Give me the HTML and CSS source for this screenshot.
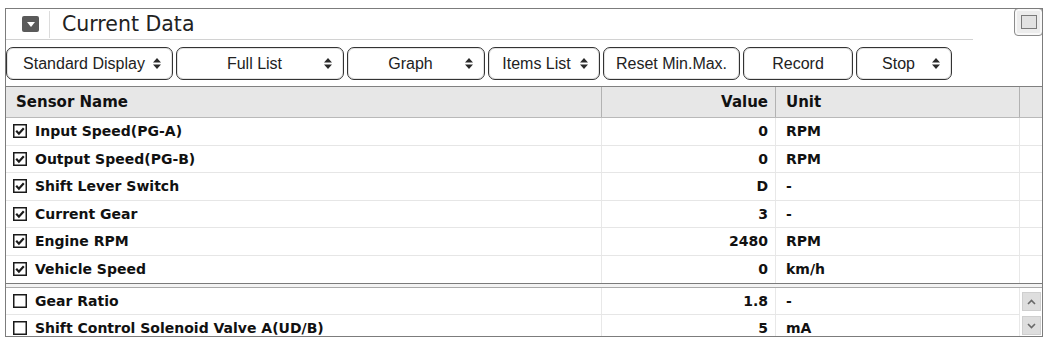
FILE: index.html
```html
<!DOCTYPE html>
<html lang="en">
<head>
    <meta charset="UTF-8">
    <meta name="viewport" content="width=device-width, initial-scale=1.0">
    <title>Current Data</title>
    <link rel="stylesheet" href="styles.css">
</head>
<body>
    <div class="panel">
        <div class="panel-title">
            <span class="collapse-btn">
                <svg width="8" height="5" viewBox="0 0 8 5"><path d="M0 0 L8 0 L4 5 Z" fill="#fff"/></svg>
            </span>
            <span class="title-sep"></span>
            <h1>Current Data</h1>
        </div>
        <span class="max-btn"><span class="max-inner"></span></span>

        <div class="toolbar">
            <button class="tool-btn select"><span class="label">Standard Display</span><svg class="arrows" width="8" height="11" viewBox="0 0 8 11"><path d="M0 4.5 L4 0 L8 4.5 Z M0 6.5 L8 6.5 L4 11 Z" fill="#2a2a2a"/></svg></button>
            <button class="tool-btn select"><span class="label">Full List</span><svg class="arrows" width="8" height="11" viewBox="0 0 8 11"><path d="M0 4.5 L4 0 L8 4.5 Z M0 6.5 L8 6.5 L4 11 Z" fill="#2a2a2a"/></svg></button>
            <button class="tool-btn select"><span class="label">Graph</span><svg class="arrows" width="8" height="11" viewBox="0 0 8 11"><path d="M0 4.5 L4 0 L8 4.5 Z M0 6.5 L8 6.5 L4 11 Z" fill="#2a2a2a"/></svg></button>
            <button class="tool-btn select tight"><span class="label">Items List</span><svg class="arrows" width="8" height="11" viewBox="0 0 8 11"><path d="M0 4.5 L4 0 L8 4.5 Z M0 6.5 L8 6.5 L4 11 Z" fill="#2a2a2a"/></svg></button>
            <button class="tool-btn">Reset Min.Max.</button>
            <button class="tool-btn">Record</button>
            <button class="tool-btn select"><span class="label">Stop</span><svg class="arrows" width="8" height="11" viewBox="0 0 8 11"><path d="M0 4.5 L4 0 L8 4.5 Z M0 6.5 L8 6.5 L4 11 Z" fill="#2a2a2a"/></svg></button>
        </div>

        <div class="grid">
            <div class="grid-head">
                <div class="cell name">Sensor Name</div>
                <div class="cell value">Value</div>
                <div class="cell unit">Unit</div>
                <div class="cell blank"></div>
            </div>

            <div class="grid-body">
                <div class="row">
                    <div class="cell name"><svg class="check" width="14" height="14" viewBox="0 0 14 14"><rect x="0.75" y="0.75" width="12.5" height="12.5" fill="#fff" stroke="#1a1a1a" stroke-width="1.5"/><path d="M3.2 6.8 L5.9 9.7 L10.8 4.2" fill="none" stroke="#1a1a1a" stroke-width="2.2"/></svg>Input Speed(PG-A)</div>
                    <div class="cell value">0</div>
                    <div class="cell unit">RPM</div>
                    <div class="cell blank"></div>
                </div>
                <div class="row">
                    <div class="cell name"><svg class="check" width="14" height="14" viewBox="0 0 14 14"><rect x="0.75" y="0.75" width="12.5" height="12.5" fill="#fff" stroke="#1a1a1a" stroke-width="1.5"/><path d="M3.2 6.8 L5.9 9.7 L10.8 4.2" fill="none" stroke="#1a1a1a" stroke-width="2.2"/></svg>Output Speed(PG-B)</div>
                    <div class="cell value">0</div>
                    <div class="cell unit">RPM</div>
                    <div class="cell blank"></div>
                </div>
                <div class="row">
                    <div class="cell name"><svg class="check" width="14" height="14" viewBox="0 0 14 14"><rect x="0.75" y="0.75" width="12.5" height="12.5" fill="#fff" stroke="#1a1a1a" stroke-width="1.5"/><path d="M3.2 6.8 L5.9 9.7 L10.8 4.2" fill="none" stroke="#1a1a1a" stroke-width="2.2"/></svg>Shift Lever Switch</div>
                    <div class="cell value">D</div>
                    <div class="cell unit">-</div>
                    <div class="cell blank"></div>
                </div>
                <div class="row">
                    <div class="cell name"><svg class="check" width="14" height="14" viewBox="0 0 14 14"><rect x="0.75" y="0.75" width="12.5" height="12.5" fill="#fff" stroke="#1a1a1a" stroke-width="1.5"/><path d="M3.2 6.8 L5.9 9.7 L10.8 4.2" fill="none" stroke="#1a1a1a" stroke-width="2.2"/></svg>Current Gear</div>
                    <div class="cell value">3</div>
                    <div class="cell unit">-</div>
                    <div class="cell blank"></div>
                </div>
                <div class="row">
                    <div class="cell name"><svg class="check" width="14" height="14" viewBox="0 0 14 14"><rect x="0.75" y="0.75" width="12.5" height="12.5" fill="#fff" stroke="#1a1a1a" stroke-width="1.5"/><path d="M3.2 6.8 L5.9 9.7 L10.8 4.2" fill="none" stroke="#1a1a1a" stroke-width="2.2"/></svg>Engine RPM</div>
                    <div class="cell value">2480</div>
                    <div class="cell unit">RPM</div>
                    <div class="cell blank"></div>
                </div>
                <div class="row">
                    <div class="cell name"><svg class="check" width="14" height="14" viewBox="0 0 14 14"><rect x="0.75" y="0.75" width="12.5" height="12.5" fill="#fff" stroke="#1a1a1a" stroke-width="1.5"/><path d="M3.2 6.8 L5.9 9.7 L10.8 4.2" fill="none" stroke="#1a1a1a" stroke-width="2.2"/></svg>Vehicle Speed</div>
                    <div class="cell value">0</div>
                    <div class="cell unit">km/h</div>
                    <div class="cell blank"></div>
                </div>
            </div>

            <div class="splitter"></div>

            <div class="grid-lower">
                <div class="lower-rows">
                    <div class="row">
                        <div class="cell name"><svg class="check" width="14" height="14" viewBox="0 0 14 14"><rect x="0.75" y="0.75" width="12.5" height="12.5" fill="#fff" stroke="#1a1a1a" stroke-width="1.5"/></svg>Gear Ratio</div>
                        <div class="cell value">1.8</div>
                        <div class="cell unit">-</div>
                    </div>
                    <div class="row">
                        <div class="cell name"><svg class="check" width="14" height="14" viewBox="0 0 14 14"><rect x="0.75" y="0.75" width="12.5" height="12.5" fill="#fff" stroke="#1a1a1a" stroke-width="1.5"/></svg>Shift Control Solenoid Valve A(UD/B)</div>
                        <div class="cell value">5</div>
                        <div class="cell unit">mA</div>
                    </div>
                </div>
                <div class="vscroll">
                    <span class="scroll-btn"><svg width="9" height="6" viewBox="0 0 9 6"><path d="M1 5 L4.5 1.5 L8 5" fill="none" stroke="#6a6a6a" stroke-width="1.6"/></svg></span>
                    <span class="scroll-btn"><svg width="9" height="6" viewBox="0 0 9 6"><path d="M1 1 L4.5 4.5 L8 1" fill="none" stroke="#6a6a6a" stroke-width="1.6"/></svg></span>
                </div>
            </div>
        </div>
    </div>
</body>
</html>
```

FILE: styles.css
```css
* {
    margin: 0;
    padding: 0;
    box-sizing: border-box;
}

body {
    font-family: 'Liberation Sans', Arial, sans-serif;
    background: #fff;
    color: #1a1a1a;
}

.panel {
    position: relative;
    margin: 8px 0 0 5px;
    width: 1038px;
    height: 329px;
    border: 1px solid #7c7c7c;
    background: #fff;
    display: flex;
    flex-direction: column;
    overflow: hidden;
}

/* title bar */
.panel-title {
    flex-shrink: 0;
    height: 30px;
    display: flex;
    align-items: center;
    padding-left: 16px;
}

.collapse-btn {
    width: 17px;
    height: 16px;
    border-radius: 2px;
    background: #5a5a5a;
    display: flex;
    justify-content: center;
    align-items: center;
}

.title-sep {
    width: 1px;
    height: 27px;
    background: #dcdcdc;
    margin: 0 12px 0 10px;
}

.panel-title h1 {
    font-family: 'DejaVu Sans', sans-serif;
    font-size: 20.5px;
    font-weight: 400;
    color: #222;
}

.max-btn {
    position: absolute;
    top: -1px;
    right: -1px;
    width: 29px;
    height: 28px;
    border: 1px solid #8c8c8c;
    border-radius: 4px;
    background: #ececec;
    box-shadow: inset 0 0 0 2px #f8f8f8;
    display: flex;
    justify-content: center;
    align-items: center;
}

.max-inner {
    width: 16px;
    height: 14px;
    border: 1px solid #7a7a7a;
    background: #e2e2e2;
}

/* toolbar */
.toolbar {
    flex-shrink: 0;
    width: 967px;
    height: 47px;
    border-top: 1px solid #d2d2d2;
    padding-top: 7px;
    display: grid;
    grid-template-columns: 167px 168px 138px 112px 137px 110px 96px;
    column-gap: 3px;
    align-items: start;
}

.tool-btn {
    height: 33px;
    border: 1px solid #333;
    border-radius: 7px;
    background: #fff;
    box-shadow: inset 0 0 0 1px #e2e2e2;
    font-family: 'Liberation Sans', Arial, sans-serif;
    font-size: 16px;
    color: #222;
    display: flex;
    justify-content: center;
    align-items: center;
    white-space: nowrap;
}

.tool-btn.select {
    justify-content: space-between;
    padding: 0 11px 0 12px;
}

.tool-btn.select .label {
    flex: 1;
    text-align: center;
}

.tool-btn.tight {
    padding-left: 8px;
}

.arrows {
    margin-left: 4px;
}

/* data grid */
.grid {
    flex: 1;
    min-height: 0;
    display: flex;
    flex-direction: column;
    border-top: 1px solid #808080;
    font-family: 'DejaVu Sans', sans-serif;
    font-weight: 700;
    font-size: 14px;
    color: #111;
}

.grid-head,
.row {
    display: grid;
    grid-template-columns: 596px 174px 244px 22px;
}

.grid-head {
    flex-shrink: 0;
    height: 31px;
    background: #e7e7e7;
    border-bottom: 1px solid #b9b9b9;
    font-size: 15px;
}

.grid-body,
.splitter {
    flex-shrink: 0;
}

.cell {
    display: flex;
    align-items: center;
    white-space: nowrap;
    overflow: hidden;
}

.grid-head .cell {
    border-right: 1px solid #b2b2b2;
}

.grid-head .cell.blank {
    border-right: none;
}

.grid-head .name {
    padding-left: 10px;
}

.cell.value {
    justify-content: flex-end;
    padding-right: 7px;
}

.cell.unit {
    padding-left: 10px;
}

.row {
    height: 27.5px;
    border-bottom: 1px solid #e6e6e6;
}

.row .cell {
    border-right: 1px solid #e8e8e8;
}

.row .cell.blank {
    border-right: none;
}

.row .name {
    padding-left: 7px;
}

.check {
    flex-shrink: 0;
    margin-right: 8px;
}

.grid-body .row:last-child {
    border-bottom: none;
}

.splitter {
    height: 5px;
    border-top: 1px solid #7a7a7a;
    border-bottom: 1px solid #a9a9a9;
    background: #f3f3f3;
}

.grid-lower {
    flex: 1;
    min-height: 0;
    display: flex;
    overflow: hidden;
}

.lower-rows {
    flex: 1;
}

.lower-rows .row {
    height: 27px;
    grid-template-columns: 596px 174px 244px;
}

.vscroll {
    width: 22px;
    display: flex;
    flex-direction: column;
    align-items: center;
    gap: 5px;
    padding-top: 4px;
}

.scroll-btn {
    width: 19px;
    height: 19px;
    background: #dedede;
    border: 1px solid #cfcfcf;
    display: flex;
    justify-content: center;
    align-items: center;
}
```
